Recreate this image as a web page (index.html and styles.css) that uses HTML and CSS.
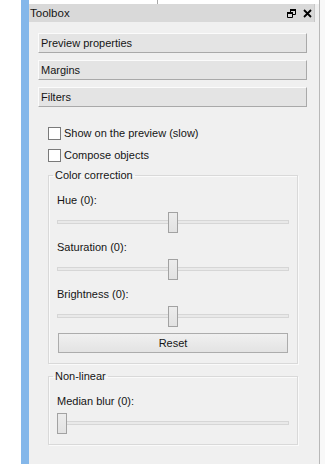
FILE: index.html
```html
<!DOCTYPE html>
<html>
<head>
<meta charset="utf-8">
<link rel="stylesheet" href="styles.css">
</head>
<body>
<div class="app">
  <div class="gutter"></div>
  <div class="accent"></div>
  <div class="dock">
    <div class="topstrip"><div class="split"></div></div>
    <div class="titlebar">
      <span class="title">Toolbox</span>
      <span class="tools">
        <svg class="ico" width="9" height="9" viewBox="0 0 9 9">
          <path d="M3.5 0.5h5v5h-5z" fill="none" stroke="#000" stroke-width="1"/>
          <path d="M3 0h6v2h-6z" fill="#000"/>
          <path d="M0.5 3.5h5v5h-5z" fill="#d9d9d9" stroke="#000" stroke-width="1"/>
          <path d="M0 3h6v2h-6z" fill="#000"/>
        </svg>
        <svg class="ico" width="9" height="9" viewBox="0 0 9 9">
          <path d="M1 1L8 8M8 1L1 8" stroke="#000" stroke-width="1.8" fill="none"/>
        </svg>
      </span>
    </div>
    <div class="content">
      <div class="tab">Preview properties</div>
      <div class="tab">Margins</div>
      <div class="tab">Filters</div>

      <div class="checks">
        <label class="check"><span class="box"></span>Show on the preview (slow)</label>
        <label class="check"><span class="box"></span>Compose objects</label>
      </div>

      <fieldset class="group">
        <legend>Color correction</legend>
        <div class="item">
          <div class="lbl">Hue (0):</div>
          <div class="slider"><div class="groove"></div><div class="handle" style="left:111px"></div></div>
        </div>
        <div class="item">
          <div class="lbl">Saturation (0):</div>
          <div class="slider"><div class="groove"></div><div class="handle" style="left:111px"></div></div>
        </div>
        <div class="item">
          <div class="lbl">Brightness (0):</div>
          <div class="slider"><div class="groove"></div><div class="handle" style="left:111px"></div></div>
        </div>
        <div class="reset">Reset</div>
      </fieldset>

      <fieldset class="group group2">
        <legend>Non-linear</legend>
        <div class="item">
          <div class="lbl">Median blur (0):</div>
          <div class="slider"><div class="groove"></div><div class="handle" style="left:0px"></div></div>
        </div>
      </fieldset>
    </div>
  </div>
  <div class="edge"></div>
</div>
</body>
</html>
```

FILE: styles.css
```css
html, body {
  margin: 0;
  padding: 0;
  background: #ffffff;
}
body {
  width: 325px;
  height: 464px;
  overflow: hidden;
  font-family: "Liberation Sans", Arial, sans-serif;
  font-size: 11px;
  color: #151515;
}
.app {
  display: flex;
  height: 464px;
}
.gutter {
  width: 21px;
  background: #ffffff;
}
.accent {
  width: 8px;
  background: #84b7ea;
}
.dock {
  width: 290px;
  background: #f0f0f0;
  border-right: 1px solid #b8b8b8;
  display: flex;
  flex-direction: column;
}
.edge {
  flex: 1;
  background: #f8f8f8;
}
.topstrip {
  height: 4px;
  background: #ffffff;
  padding-left: 128px;
}
.split {
  width: 1px;
  height: 4px;
  background: #a8a8a8;
}
.titlebar {
  width: 286px;
  height: 18px;
  box-sizing: border-box;
  background: #d9d9d9;
  border-right: 1px solid #c8c8c8;
  display: flex;
  align-items: center;
  justify-content: space-between;
  padding-left: 1px;
  padding-right: 2px;
  font-size: 11.5px;
}
.title {
  line-height: 18px;
}
.tools {
  display: flex;
  gap: 7px;
  align-items: center;
}
.ico {
  display: block;
}
.content {
  padding: 11px 12px 0 9px;
  display: flex;
  flex-direction: column;
}
.tab {
  height: 20px;
  box-sizing: border-box;
  background: #e4e4e4;
  border: 1px solid;
  border-color: #fbfbfb #a9a9a9 #a9a9a9 #fbfbfb;
  padding-left: 2px;
  line-height: 18px;
  margin-bottom: 7px;
}
.checks {
  margin-top: 8px;
  padding-left: 10px;
  display: flex;
  flex-direction: column;
}
.check {
  height: 22px;
  display: flex;
  align-items: center;
  gap: 3px;
}
.box {
  width: 13px;
  height: 13px;
  box-sizing: border-box;
  border: 1px solid #7a7a7a;
  background: #ffffff;
}
.group {
  margin: 2px 9px 0 10px;
  width: 250px;
  box-sizing: border-box;
  border: 1px solid #d9d9d9;
  box-shadow: inset 1px 1px 0 #fafafa, 1px 1px 0 #fafafa;
  padding: 10px 8px 10px 8px;
  min-width: 0;
}
.group legend {
  padding: 0 2px;
  margin-left: -4px;
  line-height: 14px;
}
.group2 {
  margin-top: 5px;
}
.item {
  display: flex;
  flex-direction: column;
  margin-bottom: 6px;
}
.lbl {
  line-height: 16px;
  height: 16px;
}
.slider {
  position: relative;
  height: 21px;
  margin-top: 4px;
}
.groove {
  position: absolute;
  left: 0;
  right: 0;
  top: 8px;
  height: 4px;
  box-sizing: border-box;
  background: #e9e9e9;
  border: 1px solid #d6d6d6;
}
.handle {
  position: absolute;
  top: 0;
  width: 10px;
  height: 21px;
  box-sizing: border-box;
  border: 1px solid #a2a2a2;
  background: linear-gradient(#ececec, #e2e2e2);
}
.group2 .item {
  margin-bottom: 0;
}
.reset {
  margin-top: 4px;
  height: 20px;
  box-sizing: border-box;
  border: 1px solid #acacac;
  background: linear-gradient(#f0f0f0, #e3e3e3);
  text-align: center;
  line-height: 18px;
  margin-left: 1px;
  margin-right: 1px;
}
```
